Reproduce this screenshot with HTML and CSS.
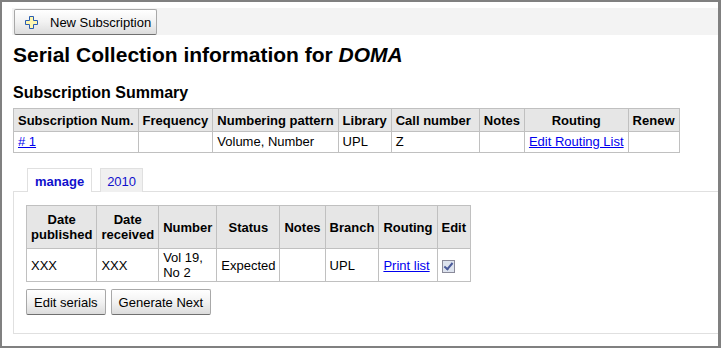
FILE: index.html
```html
<!DOCTYPE html>
<html>
<head>
<meta charset="utf-8">
<link rel="stylesheet" href="styles.css">
</head>
<body>
<div class="frame">
  <div class="toolbar">
    <button class="btn new-btn"><svg class="plus" width="13" height="13" viewBox="0 0 13 13"><path d="M4.5 0.5h4v4h4v4h-4v4h-4v-4h-4v-4h4z" fill="#fff7b0" stroke="#2a5db0" stroke-width="1"/></svg><span>New Subscription</span></button>
  </div>
  <h1 class="title">Serial Collection information for <em>DOMA</em></h1>
  <h2 class="subtitle">Subscription Summary</h2>
  <table class="grid summary">
    <tr>
      <th>Subscription Num.</th><th>Frequency</th><th>Numbering pattern</th><th>Library</th><th class="w-call">Call number</th><th>Notes</th><th class="center">Routing</th><th>Renew</th>
    </tr>
    <tr>
      <td><a href="#">#&nbsp;1</a></td><td></td><td>Volume, Number</td><td>UPL</td><td>Z</td><td></td><td><a href="#">Edit Routing List</a></td><td></td>
    </tr>
  </table>
  <div class="tabs">
    <div class="tab active">manage</div>
    <div class="tab">2010</div>
  </div>
  <div class="panel">
    <table class="grid serials">
      <tr>
        <th>Date<br>published</th><th>Date<br>received</th><th>Number</th><th>Status</th><th>Notes</th><th>Branch</th><th>Routing</th><th>Edit</th>
      </tr>
      <tr>
        <td>XXX</td><td>XXX</td><td>Vol 19,<br>No 2</td><td>Expected</td><td></td><td>UPL</td><td><a href="#">Print list</a></td><td><span class="check"></span></td>
      </tr>
    </table>
    <div class="actions">
      <button class="btn btn-edit">Edit serials</button>
      <button class="btn">Generate Next</button>
    </div>
  </div>
</div>
</body>
</html>
```
FILE: styles.css
```css
html, body {
  margin: 0;
  padding: 0;
  background: #fff;
}
body {
  font-family: "Liberation Sans", Arial, sans-serif;
  font-size: 13px;
  color: #000;
}
.frame {
  box-sizing: border-box;
  width: 721px;
  height: 348px;
  border-style: solid;
  border-color: #808080;
  border-width: 2px 3px 2px 2px;
  overflow: hidden;
  padding-top: 6px;
}
.toolbar {
  margin-left: 10px;
  height: 27px;
  background: #f3f3f3;
  padding: 1px 0 0 2px;
  box-sizing: border-box;
}
.btn {
  font-family: "Liberation Sans", Arial, sans-serif;
  font-size: 13px;
  color: #000;
  height: 26px;
  border: 1px solid #a8a8a8;
  border-bottom-color: #707070;
  border-radius: 2px;
  background: linear-gradient(#ffffff, #f2f2f2 50%, #dcdcdc);
  padding: 0 7px;
  margin: 0;
  white-space: nowrap;
}
.new-btn {
  width: 143px;
  display: flex;
  align-items: center;
  padding-left: 10px;
}
.plus {
  margin-right: 12px;
  flex: none;
}
.title {
  font-size: 21px;
  font-weight: bold;
  margin: 8px 0 0 11px;
  line-height: 24px;
}
.title em {
  font-style: italic;
}
.subtitle {
  font-size: 16px;
  font-weight: bold;
  margin: 16px 0 0 11px;
  line-height: 19px;
}
.grid {
  border-collapse: collapse;
  line-height: 15px;
}
.grid th, .grid td {
  border: 1px solid #c0c0c0;
  padding: 3px 4px 2px;
  text-align: left;
  white-space: nowrap;
}
.grid th {
  background: #e6e6e6;
  font-weight: bold;
}
.grid td {
  padding: 2px 4px 3px;
}
.grid th.center { text-align: center; }
.summary {
  margin: 6px 0 0 11px;
}
.summary th { padding: 4px 4px 3px; }
.summary th.w-call { padding-right: 8px; }
a { color: #0000ee; }
.tabs {
  display: flex;
  margin: 15px 0 0 25px;
  gap: 8px;
}
.tab {
  box-sizing: border-box;
  height: 24px;
  padding: 4px 6px 0;
  border: 1px solid #e0e0e0;
  border-bottom: none;
  background: #f0f0f0;
  color: #1010cc;
  font-size: 13px;
  line-height: 17px;
  margin-bottom: -1px;
  position: relative;
}
.tab.active {
  background: #fff;
  font-weight: bold;
  padding: 4px 7px 0;
  z-index: 1;
}
.panel {
  margin-left: 11px;
  border: 1px solid #e0e0e0;
  border-right: none;
  height: 143px;
  box-sizing: border-box;
  padding: 13px 0 0 12px;
}
.serials th {
  text-align: center;
  padding: 6px 4px 6px;
  vertical-align: middle;
}
.serials td {
  padding: 1px 4px 1px;
  vertical-align: middle;
}
.check {
  display: inline-block;
  width: 11px;
  height: 11px;
  border: 1px solid #8a8a9a;
  background: #dde3ee;
  position: relative;
  vertical-align: middle;
}
.check::after {
  content: "";
  position: absolute;
  left: 3px;
  top: 0px;
  width: 3px;
  height: 7px;
  border: solid #4a5a9a;
  border-width: 0 2px 2px 0;
  transform: rotate(40deg);
}
.actions {
  display: flex;
  gap: 5px;
  margin-top: 7px;
}
```
